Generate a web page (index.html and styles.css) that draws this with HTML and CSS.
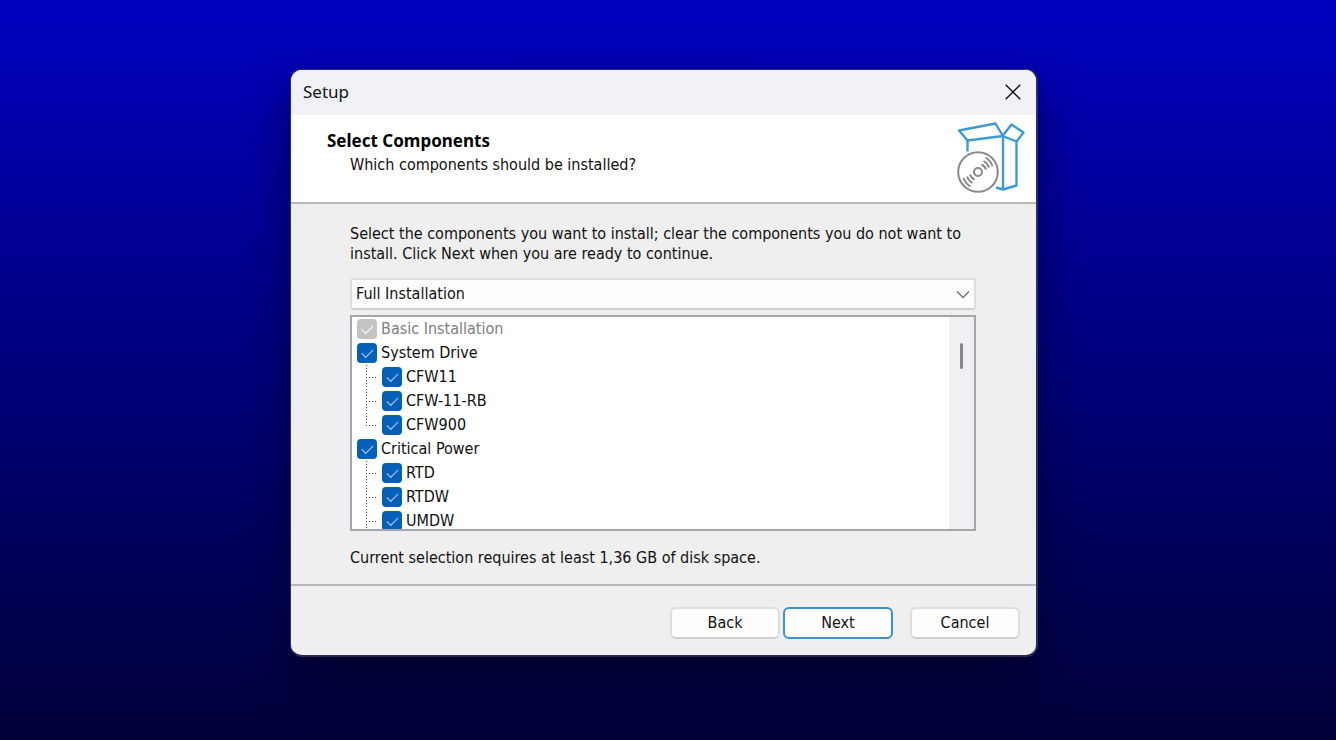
FILE: index.html
```html
<!DOCTYPE html>
<html lang="en">
<head>
<meta charset="utf-8">
<meta name="viewport" content="width=device-width, initial-scale=1">
<title>Setup</title>
<link rel="stylesheet" href="styles.css">
</head>
<body>
<main class="dialog">
  <div class="titlebar">
    <span>Setup</span>
    <button class="close" type="button" aria-label="Close">
      <svg width="16" height="16" viewBox="0 0 16 16" fill="none" stroke="#111" stroke-width="1.4"><path d="M.7.7l14.6 14.6M15.3.7L.7 15.3"/></svg>
    </button>
  </div>
  <header class="header">
    <div>
      <h1>Select Components</h1>
      <p class="subtitle">Which components should be installed?</p>
    </div>
    <svg class="logo" width="70" height="74" viewBox="0 0 70 74" fill="none" aria-hidden="true">
      <g stroke="#3c9bd6" stroke-width="2.4" stroke-linejoin="round">
        <path d="M3 9.500l36.500-7 7.500 12.500-35.500 4.500z"/>
        <path d="M46.500 15l9-11.500 12 8-7 9z"/>
        <path d="M11.500 19.500v11M47 15v53.500M60.500 20.500v44l-13.500 4-7-2"/>
      </g>
      <circle cx="22" cy="51" r="22" fill="#fff"/>
      <g stroke="#8a8a8a" stroke-width="2">
        <circle cx="22" cy="51" r="19.800"/>
        <circle cx="22" cy="51" r="4"/>
        <path d="M25.500 43.500a8 8 0 0 1 4.500 5M27.500 40a12 12 0 0 1 5.500 6.500M29.500 36.500a16 16 0 0 1 7 8.500M18.500 58.500a8 8 0 0 1-4.500-5M16.500 62a12 12 0 0 1-5.500-6.500M14.500 65.500a16 16 0 0 1-7-8.500"/>
      </g>
    </svg>
  </header>
  <section class="content">
    <p class="intro">Select the components you want to install; clear the components you do not want to install. Click Next when you are ready to continue.</p>
    <div class="select">
      <select aria-label="Installation type"><option>Full Installation</option></select>
      <svg width="14" height="9" viewBox="0 0 14 9" fill="none" stroke="#777" stroke-width="1.5"><path d="M1 1.500l6 6 6-6"/></svg>
    </div>
    <div class="components">
      <ul class="tree">
        <li><label class="row disabled"><input type="checkbox" checked disabled>Basic Installation</label></li>
        <li><label class="row"><input type="checkbox" checked>System Drive</label>
          <ul>
            <li><label class="row"><span class="branch"></span><input type="checkbox" checked>CFW11</label></li>
            <li><label class="row"><span class="branch"></span><input type="checkbox" checked>CFW-11-RB</label></li>
            <li><label class="row"><span class="branch end"></span><input type="checkbox" checked>CFW900</label></li>
          </ul>
        </li>
        <li><label class="row"><input type="checkbox" checked>Critical Power</label>
          <ul>
            <li><label class="row"><span class="branch"></span><input type="checkbox" checked>RTD</label></li>
            <li><label class="row"><span class="branch"></span><input type="checkbox" checked>RTDW</label></li>
            <li><label class="row"><span class="branch"></span><input type="checkbox" checked>UMDW</label></li>
          </ul>
        </li>
      </ul>
      <div class="scrollbar"><div class="thumb"></div></div>
    </div>
    <p class="space">Current selection requires at least 1,36 GB of disk space.</p>
  </section>
  <footer class="footer">
    <button class="button" type="button">Back</button>
    <button class="button primary" type="button">Next</button>
    <button class="button cancel" type="button">Cancel</button>
  </footer>
</main>
</body>
</html>
```
FILE: styles.css
```css
* { box-sizing: border-box; }

body {
  margin: 0;
  min-height: 100vh;
  padding: 16px 8px 30px 0;
  display: grid;
  place-items: center;
  background: linear-gradient(#0000c0, #000038);
  color: #111;
  font: 16px/20px "DejaVu Sans Condensed", "DejaVu Sans", sans-serif;
}

h1, p, ul { margin: 0; padding: 0; }
ul { list-style: none; }
button, select, input { font: inherit; color: inherit; margin: 0; }

.dialog {
  width: 100%;
  max-width: 748px;
  border: 1px solid #2b2b70;
  border-right-width: 2px;
  border-bottom: 2px solid #2b2b50;
  border-radius: 12px;
  overflow: hidden;
  background: #efefef;
  box-shadow: 0 20px 44px rgba(0, 0, 20, .5);
}

.titlebar {
  display: flex;
  align-items: center;
  justify-content: space-between;
  height: 45px;
  padding: 0 15px 1px 12px;
  background: #f1f2f8;
  font-family: "Noto Sans", sans-serif;
  font-size: 17px;
}

.close {
  display: flex;
  padding: 0;
  border: 0;
  background: none;
}

.header {
  display: flex;
  justify-content: space-between;
  align-items: flex-start;
  padding: 6px 10px 7px 36px;
  background: #fff;
  border-bottom: 2px solid #b8b8b8;
}

.header h1 {
  padding-top: 10px;
  font-family: "Noto Sans", sans-serif;
  font-size: 17px;
  line-height: 20px;
  color: #000;
}

.subtitle { padding: 4px 0 0 23px; }

.content { padding: 20px 60px 16px 59px; }

.intro { margin-bottom: 14px; }

.select {
  display: grid;
  align-items: center;
  margin-bottom: 5px;
}

.select select, .select svg { grid-area: 1 / 1; }

.select select {
  appearance: none;
  width: 100%;
  height: 32px;
  padding: 0 4px;
  border: 2px solid #dedede;
  border-bottom-color: #d0d0d0;
  border-radius: 3px;
  background: #fdfdfd;
}

.select svg {
  justify-self: end;
  margin-right: 6px;
  pointer-events: none;
}

.components {
  display: flex;
  height: 216px;
  overflow: hidden;
  border: 2px solid #a3a6ad;
  background: #fff;
}

.tree { flex: 1; padding-left: 5px; }

.row {
  display: flex;
  align-items: center;
  height: 24px;
}

.row input {
  appearance: none;
  display: grid;
  place-items: center;
  width: 20px;
  height: 20px;
  margin-right: 4px;
  border-radius: 4px;
  background: #0560b9;
}

.row input::before {
  content: "";
  width: 10px;
  height: 5px;
  margin-bottom: 3px;
  border: solid #b5d3ef;
  border-width: 0 0 1px 1px;
  rotate: -45deg;
}

.disabled { color: #808080; }
.disabled input { background: #c3c3c3; }
.disabled input::before { border-color: #fff; }

.branch {
  width: 12px;
  height: 24px;
  margin: 0 4px 0 9px;
  background:
    repeating-linear-gradient(#555 0 1px, #fff 1px 3px) 0 0 / 1px 100% no-repeat,
    repeating-linear-gradient(90deg, #555 0 1px, #fff 1px 3px) 0 50% / 11px 1px no-repeat;
}

.branch.end {
  background-size: 1px 13px, 11px 1px;
}

.scrollbar {
  width: 25px;
  padding-top: 26px;
  background: #f0f0f0;
}

.thumb {
  width: 3px;
  height: 26px;
  margin-left: 11px;
  border-radius: 2px;
  background: #878787;
}

.space { margin-top: 17px; }

.footer {
  display: flex;
  justify-content: flex-end;
  gap: 3px;
  padding: 21px 16px 16px;
  border-top: 2px solid #b8b8b8;
}

.button {
  width: 110px;
  height: 32px;
  padding: 0;
  border: 2px solid #dedede;
  border-bottom-color: #d0d0d0;
  border-radius: 6px;
  background: #fdfdfd;
}

.primary { border-color: #3a92d6; }
.cancel { margin-left: 14px; }
```
